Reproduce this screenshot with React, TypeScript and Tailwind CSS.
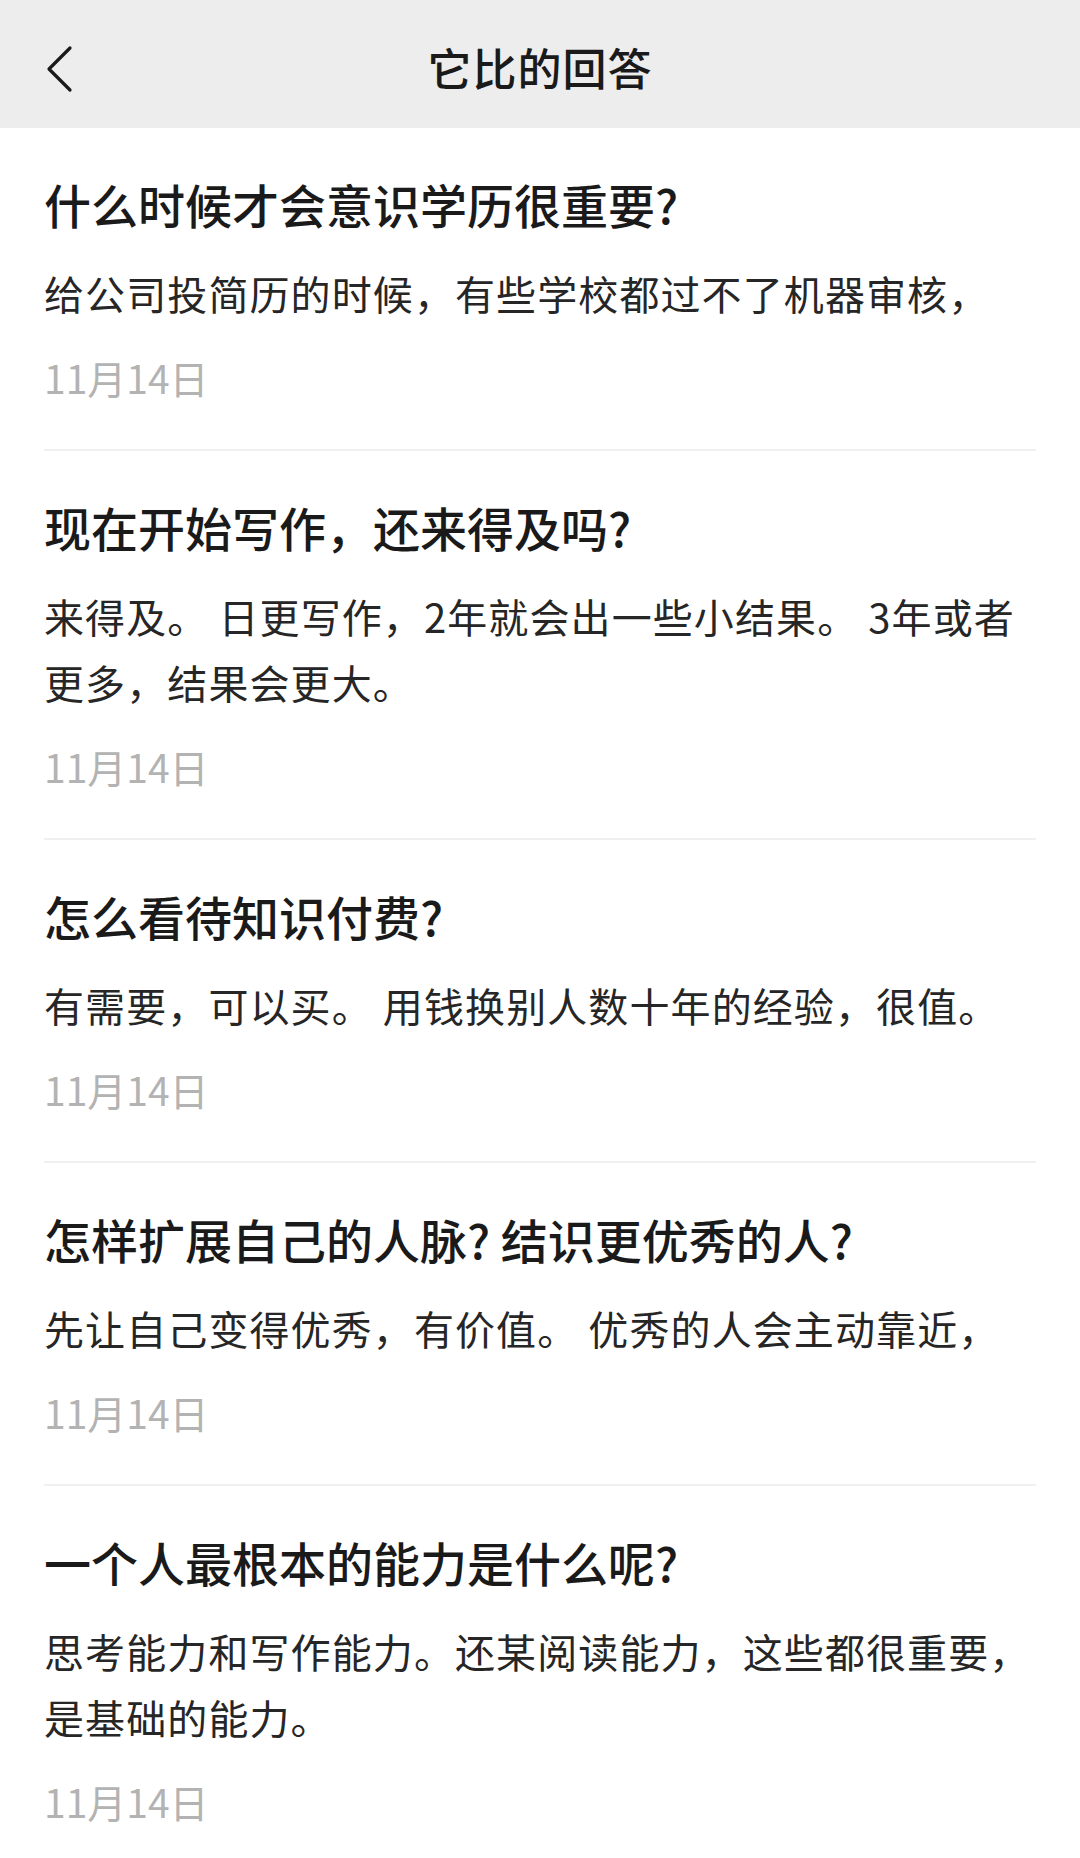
import React from "react";

type Answer = {
  id: number;
  question: string;
  excerpt: string;
  date: string;
};

const answers: Answer[] = [
  {
    id: 1,
    question: "什么时候才会意识学历很重要?",
    excerpt: "给公司投简历的时候，有些学校都过不了机器审核，",
    date: "11月14日",
  },
  {
    id: 2,
    question: "现在开始写作，还来得及吗?",
    excerpt: "来得及。 日更写作，2年就会出一些小结果。 3年或者更多，结果会更大。",
    date: "11月14日",
  },
  {
    id: 3,
    question: "怎么看待知识付费?",
    excerpt: "有需要，可以买。 用钱换别人数十年的经验，很值。",
    date: "11月14日",
  },
  {
    id: 4,
    question: "怎样扩展自己的人脉? 结识更优秀的人?",
    excerpt: "先让自己变得优秀，有价值。 优秀的人会主动靠近，",
    date: "11月14日",
  },
  {
    id: 5,
    question: "一个人最根本的能力是什么呢?",
    excerpt: "思考能力和写作能力。还某阅读能力，这些都很重要，是基础的能力。",
    date: "11月14日",
  },
];

const FONT = { fontFamily: '"Noto Sans CJK SC", "Noto Sans", sans-serif' };

export default function App() {
  return (
    <div className="min-h-screen w-[1080px] bg-white text-[#1a1a1a]" style={FONT}>
      {/* NAV BAR */}
      <div className="relative h-[128px] bg-[#ededed] flex items-center justify-center">
        <button className="absolute left-[44px] top-[44px] w-[30px] h-[50px] flex items-center justify-center">
          <svg width="28" height="48" viewBox="0 0 28 48" fill="none">
            <path d="M25 3 L4 24 L25 45" stroke="#1a1a1a" strokeWidth="3.2" strokeLinecap="round" strokeLinejoin="round" />
          </svg>
        </button>
        <h1 className="mt-[6px] text-[44px] font-medium leading-none tracking-[1px] text-[#1a1a1a]">
          它比的回答
        </h1>
      </div>

      {/* ANSWER LIST */}
      <div className="px-[44px]">
        {answers.map((a) => (
          <div key={a.id} className="pt-[46px] pb-[42px] border-b-2 border-[#f0f0f0] last:border-b-0">
            <h2 className="text-[47px] leading-[60px] font-medium text-[#1a1a1a]">{a.question}</h2>
            <p className="mt-[26px] text-[40px] leading-[66px] tracking-[1.1px] text-[#262626]">
              {a.excerpt}
            </p>
            <div className="mt-[21px] text-[39px] leading-[60px] text-[#b3b3b3]">{a.date}</div>
          </div>
        ))}
      </div>
    </div>
  );
}
